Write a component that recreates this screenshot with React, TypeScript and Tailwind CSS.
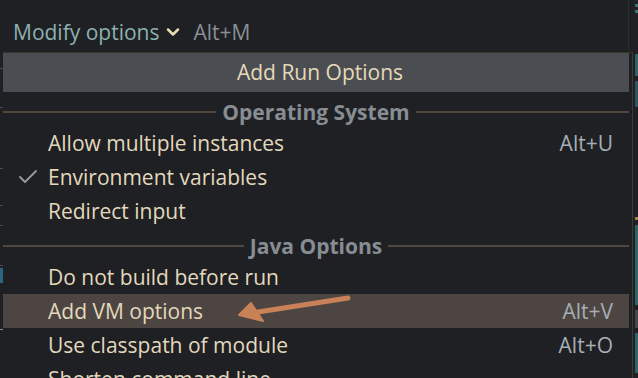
import { Check, ChevronDown } from "lucide-react";

const font = { fontFamily: '"Open Sans", "Noto Sans", sans-serif' };

function Separator({ label }: { label: string }) {
  return (
    <div className="flex h-[32px] items-center gap-[6px] pt-[4px]">
      <div className="h-[2px] flex-1 bg-[#51483f]" />
      <span className="text-[21px] font-bold leading-none text-[#878d93]">{label}</span>
      <div className="h-[2px] flex-1 bg-[#51483f]" />
    </div>
  );
}

function Item({
  label,
  shortcut,
  checked,
  active,
}: {
  label: string;
  shortcut?: string;
  checked?: boolean;
  active?: boolean;
}) {
  return (
    <div
      className={`flex h-[34px] items-center pr-[16px] ${active ? "bg-[#4c4541]" : ""}`}
    >
      <div className="flex w-[45px] pl-[13px]">
        {checked && <Check className="h-[24px] w-[24px] text-[#9b9b9b]" strokeWidth={1.8} />}
      </div>
      <span className="flex-1 text-[21px] leading-none text-[#e3d8bd]">{label}</span>
      {shortcut && <span className="text-[21px] leading-none text-[#a7aeb5]">{shortcut}</span>}
    </div>
  );
}

export default function App() {
  return (
    <div className="relative flex h-[378px] w-[638px] flex-col overflow-hidden bg-[#1e2023]" style={font}>
      {/* editor toolbar */}
      <div className="flex h-[52px] shrink-0">
        <div className="flex flex-1 items-center pl-[13px] pt-[12px]">
          <span className="text-[21px] leading-none text-[#8db1b1]">Modify options</span>
          <ChevronDown className="ml-[3px] h-[20px] w-[20px] text-[#e8dab2]" strokeWidth={3} />
          <span className="ml-[11px] text-[21px] leading-none text-[#888f95]">Alt+M</span>
        </div>
        <div className="w-[1px] bg-[#2c2e31]" />
        <div className="flex w-[9px] flex-col gap-[3px] pl-[6px] pt-[4px]">
          <div className="h-[3px] w-[3px] bg-[#3d7373]" />
          <div className="h-[3px] w-[3px] bg-[#3d7373]" />
        </div>
      </div>

      <div className="flex flex-1">
        {/* left gutter */}
        <div className="flex w-[3px] flex-col">
          <div className="mt-[16px] h-[1px] bg-[#4a4d51]" />
          <div className="mt-[38px] h-[1px] bg-[#4a4d51]" />
          <div className="mt-[60px] h-[1px] bg-[#4a4d51]" />
          <div className="mt-[36px] h-[1px] bg-[#4a4d51]" />
          <div className="mt-[19px] h-[1px] bg-[#4a4d51]" />
          <div className="mt-[39px] h-[1px] bg-[#4a4d51]" />
          <div className="mt-[2px] h-[15px] bg-[#2c6580]" />
          <div className="mt-[46px] h-[1px] bg-[#7b8d9c]" />
        </div>

        {/* popup */}
        <div className="flex flex-1 border-t border-[#3a332e]">
          <div className="flex w-[626px] flex-col">
            <div className="flex h-[39px] items-center justify-center bg-[#4a4d52] pl-[8px]">
              <span className="text-[21px] leading-none text-[#e6d9b8]">Add Run Options</span>
            </div>
            <div className="h-[2px]" />
            <Separator label="Operating System" />
            <Item label="Allow multiple instances" shortcut="Alt+U" />
            <Item label="Environment variables" checked />
            <Item label="Redirect input" />
            <Separator label="Java Options" />
            <Item label="Do not build before run" />
            <Item label="Add VM options" shortcut="Alt+V" active />
            <Item label="Use classpath of module" shortcut="Alt+O" />
            <Item label="Shorten command line" />
          </div>
          <div className="w-[3px]" />
          <div className="w-[1px] bg-[#3d3a37]" />
        </div>

        {/* editor strip on the right */}
        <div className="flex w-[5px] flex-col gap-[5px] pl-[2px] pt-[2px]">
          <div className="h-[22px] w-[3px] bg-[#2f6363]" />
          <div className="h-[26px] w-[3px] bg-[#2d5660]" />
          <div className="h-[100px] w-[3px]" />
          <div className="h-[3px] w-[3px] bg-[#9c8448]" />
          <div className="h-[80px] w-[3px] bg-[#2f6363]" />
          <div className="h-[18px] w-[3px] bg-[#45484c]" />
          <div className="h-[40px] w-[3px] bg-[#2f6363]" />
        </div>
      </div>

      {/* annotation arrow */}
      <svg className="absolute left-0 top-0" width="638" height="378" viewBox="0 0 638 378">
        <line x1="348" y1="298" x2="258" y2="312" stroke="#c98257" strokeWidth="5" strokeLinecap="round" />
        <polygon points="239,315 251,303 263,321" fill="#c98257" stroke="#c98257" strokeWidth="2" strokeLinejoin="round" />
      </svg>
    </div>
  );
}
